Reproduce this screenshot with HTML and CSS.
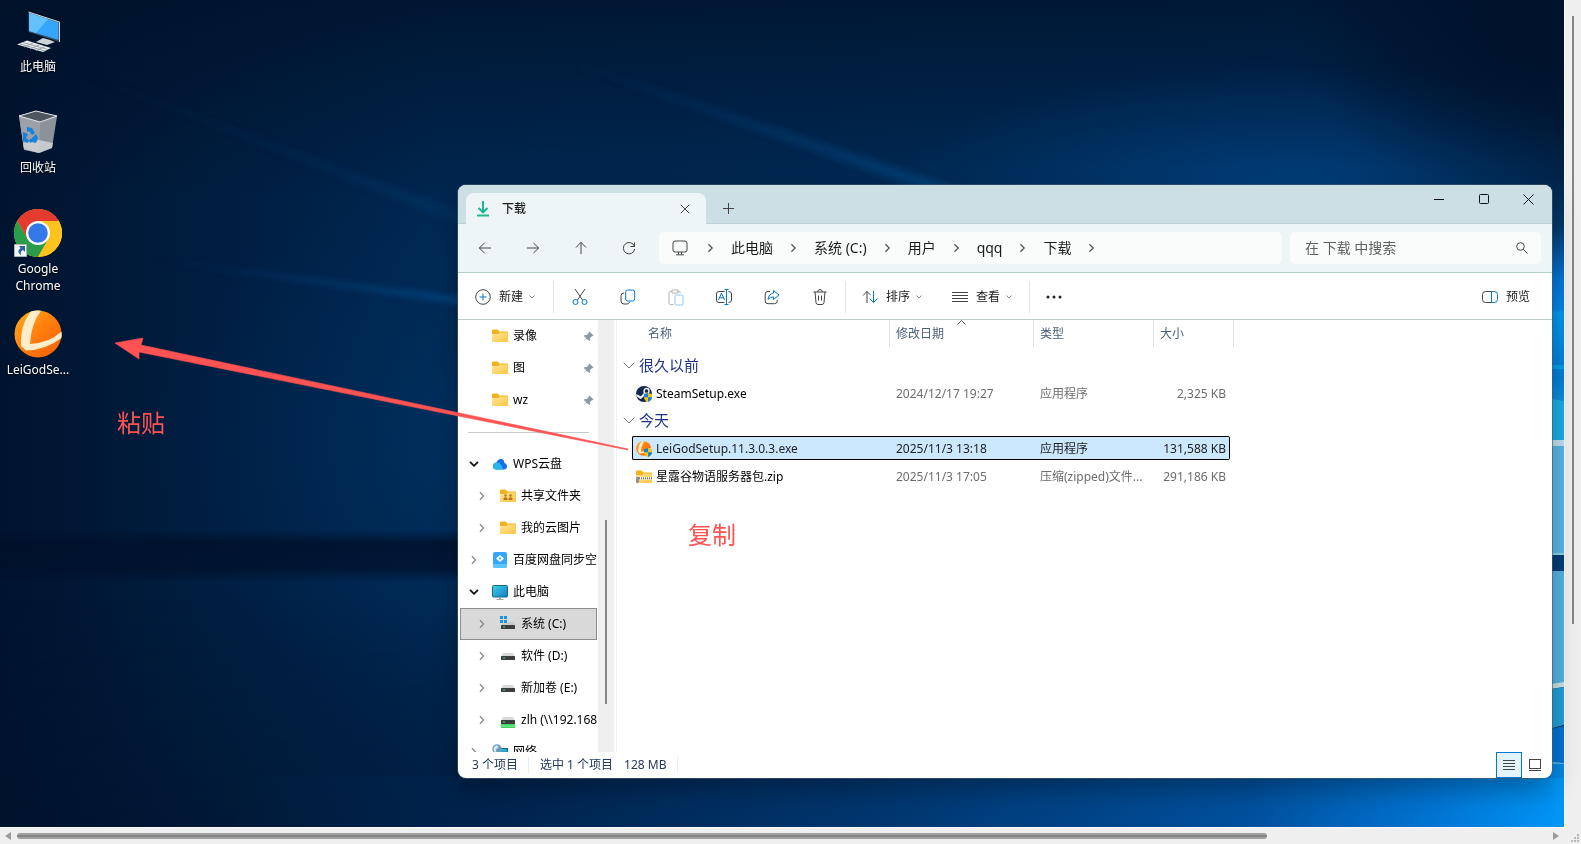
FILE: index.html
```html
<!DOCTYPE html>
<html lang="zh-CN">
<head>
  <meta charset="UTF-8">
  <title>下载</title>
  <link rel="stylesheet" href="styles.css">
</head>
<body>
  <!-- Shared icons -->
  <svg class="sprite" aria-hidden="true">
    <defs>
      <linearGradient id="gFolder" x1="0" y1="0" x2="1" y2="1">
        <stop offset="0" stop-color="#ffe59b"/><stop offset="1" stop-color="#fcc640"/>
      </linearGradient>
      <linearGradient id="gScreen" x1="0" y1="0" x2="1" y2="1">
        <stop offset="0" stop-color="#3ed5e4"/><stop offset="1" stop-color="#1277c4"/>
      </linearGradient>
      <linearGradient id="gLei" x1="0" y1="0" x2="1" y2="1">
        <stop offset="0" stop-color="#ffae1c"/><stop offset=".5" stop-color="#ff7d0d"/><stop offset="1" stop-color="#f45c06"/>
      </linearGradient>
      <symbol id="folder" viewBox="0 0 16 14">
        <path d="M0 1.500Q0 .5 1 .5h4.500l2 2H15q1 0 1 1V8H0z" fill="#f3b11c"/>
        <path d="M0 5h6l1.500-1.500H15q1 0 1 1V12q0 1-1 1H1q-1 0-1-1z" fill="url(#gFolder)"/>
      </symbol>
      <symbol id="pin" viewBox="0 0 12 12">
        <path d="M7 .5 11.500 5l-1 .8-.8-.1L7.500 8l.1 2-1 1L3.900 8.400.5 11.500 3.500 8 1 5.400l1-1h2l2.300-2.200-.2-.8z" fill="#8b9aa5"/>
      </symbol>
      <symbol id="right" viewBox="0 0 8 12">
        <path d="M1.500 1.500 6 6l-4.500 4.500" fill="none" stroke="currentColor" stroke-width="1.500"/>
      </symbol>
      <symbol id="down" viewBox="0 0 10 6">
        <path d="M1 .8 5 4.800l4-4" fill="none" stroke="currentColor" stroke-width="1.800"/>
      </symbol>
      <symbol id="down-thin" viewBox="0 0 12 7">
        <path d="m.7.7 5.300 5.300L11.300.7" fill="none" stroke="currentColor"/>
      </symbol>
      <symbol id="caret" viewBox="0 0 8 6">
        <path d="M1.500 1.500 4 4l2.500-2.500" fill="none" stroke="#8a8a8a"/>
      </symbol>
      <symbol id="drive" viewBox="0 0 16 16">
        <path d="M3 5h10l2 3.500H1z" fill="#d8dadc"/>
        <rect x="1" y="8" width="14" height="4" rx=".5" fill="#3b3d3f"/>
        <rect x="3" y="9.500" width="2" height="1" fill="#3de05b"/>
      </symbol>
      <symbol id="shield" viewBox="0 0 8 9">
        <path d="M4 0 0 1v3q0 3.500 4 5 4-1.500 4-5V1z" fill="#ffc20e"/>
        <path d="M4 0 0 1v3.300h4zM4 4.300V9q4-1.500 4-4.700z" fill="#1583d8"/>
      </symbol>
      <symbol id="lei" viewBox="0 0 48 48">
        <circle cx="24" cy="24" r="23.500" fill="url(#gLei)"/>
        <path d="M17 1.500Q22 0 27 .8 17 14 16 34q19-1 31.500-12.500Q48 25 47.500 28 32 40 12 40.500L7 36Q6 15 17 1.500z" fill="#ffecc9"/>
      </symbol>
    </defs>
  </svg>

  <div class="viewer">
    <main class="desktop">
      <!-- Wallpaper -->
      <svg class="wallpaper" viewBox="0 0 1564 827" preserveAspectRatio="none" aria-hidden="true">
        <defs>
          <linearGradient id="wBase" x1="0" y1="0" x2="1" y2="0">
            <stop offset="0" stop-color="#00142f"/><stop offset=".1" stop-color="#001b3c"/><stop offset=".28" stop-color="#002750"/>
            <stop offset=".6" stop-color="#002a55"/><stop offset=".85" stop-color="#002c5a"/><stop offset="1" stop-color="#001e3e"/>
          </linearGradient>
          <linearGradient id="wTop" x1="0" y1="0" x2="0" y2="1">
            <stop offset="0" stop-color="#001027" stop-opacity=".7"/><stop offset="1" stop-color="#001027" stop-opacity="0"/>
          </linearGradient>
          <radialGradient id="wGlow">
            <stop offset="0" stop-color="#004f98" stop-opacity=".6"/><stop offset=".6" stop-color="#004a90" stop-opacity=".25"/><stop offset="1" stop-color="#004a90" stop-opacity="0"/>
          </radialGradient>
          <radialGradient id="wDark">
            <stop offset="0" stop-color="#00112a" stop-opacity=".85"/><stop offset="1" stop-color="#00112a" stop-opacity="0"/>
          </radialGradient>
          <linearGradient id="wBeam" x1="0" y1="0" x2="1" y2="0">
            <stop offset="0" stop-color="#0b5fac" stop-opacity="0"/><stop offset="1" stop-color="#0b5fac" stop-opacity=".55"/>
          </linearGradient>
          <linearGradient id="wBand" x1="0" y1="0" x2="0" y2="1">
            <stop offset="0" stop-color="#00102a" stop-opacity="0"/><stop offset=".25" stop-color="#00102a" stop-opacity=".8"/>
            <stop offset=".75" stop-color="#00102a" stop-opacity=".7"/><stop offset="1" stop-color="#00102a" stop-opacity="0"/>
          </linearGradient>
          <linearGradient id="wFloor" gradientUnits="userSpaceOnUse" x1="0" y1="0" x2="1564" y2="0">
            <stop offset="0" stop-color="#00224a" stop-opacity="0"/><stop offset=".15" stop-color="#00224a" stop-opacity="0"/>
            <stop offset=".32" stop-color="#00244e"/><stop offset=".55" stop-color="#00356d"/>
            <stop offset=".8" stop-color="#00509d"/><stop offset=".92" stop-color="#0075d4"/><stop offset="1" stop-color="#0096f6"/>
          </linearGradient>
          <linearGradient id="wShade" x1="0" y1="0" x2="0" y2="1">
            <stop offset="0" stop-color="#000f26" stop-opacity="0"/><stop offset="1" stop-color="#000f26" stop-opacity=".35"/>
          </linearGradient>
          <linearGradient id="wEdge" x1="0" y1="0" x2="0" y2="1">
            <stop offset="0" stop-color="#00264d"/><stop offset=".2" stop-color="#003a70"/><stop offset=".4" stop-color="#0074d8"/>
            <stop offset=".53" stop-color="#0086e6"/><stop offset=".54" stop-color="#0099f0"/><stop offset=".8" stop-color="#007ed9"/>
            <stop offset="1" stop-color="#16a3e0"/>
          </linearGradient>
          <filter id="soft" filterUnits="userSpaceOnUse" x="-50" y="-50" width="1700" height="950"><feGaussianBlur stdDeviation="3"/></filter>
        </defs>
        <rect width="1564" height="827" fill="url(#wBase)"/>
        <rect width="1564" height="200" fill="url(#wTop)"/>
        <ellipse cx="1290" cy="200" rx="400" ry="135" fill="url(#wGlow)"/>
        <ellipse cx="470" cy="440" rx="330" ry="260" fill="url(#wGlow)" opacity=".35"/>
        <ellipse cx="1530" cy="40" rx="240" ry="150" fill="url(#wDark)"/>
        <g fill="url(#wBeam)" filter="url(#soft)">
          <path d="M560 56 1110 238v18L560 62z" opacity=".9"/>
          <path d="M60 62 500 226v14L60 68z" opacity=".25"/>
          <path d="M150 258 500 302v7L150 261z"/>
        </g>
        <rect y="600" width="1564" height="227" fill="url(#wShade)"/>
        <rect y="530" width="470" height="52" fill="url(#wBand)"/>
        <rect y="776" width="1564" height="51" fill="url(#wFloor)"/>
        <!-- Strip of the window picture right of the explorer -->
        <g>
          <rect x="1545" y="180" width="19" height="245" fill="url(#wEdge)"/>
          <path d="M1545 365h19v4h-19z" fill="#009fe8"/>
          <path d="M1545 398l19 3v40h-19z" fill="#1caee6"/>
          <path d="M1545 440h19v6h-19z" fill="#bde2ef"/>
          <path d="M1545 446h19v108h-19z" fill="#5ab7e5"/>
          <path d="M1545 553h19v2h-19z" fill="#8bd4ef"/>
          <path d="M1545 555h19v16h-19z" fill="#003e79"/>
          <path d="M1545 571h19v113h-19z" fill="#55b3e2"/>
          <path d="M1545 685l19-3v5l-19 3z" fill="#cbe5e6"/>
          <path d="M1545 690l19-3v38l-19 5z" fill="#20a0d8"/>
          <path d="M1545 730l19-4v37h-19z" fill="#0073d5"/>
          <path d="M1545 761l19 2v2h-19z" fill="#4cb6e9"/>
          <path d="M1545 764h19v14h-19z" fill="#0088e5"/>
        </g>
      </svg>

      <nav class="shortcuts" aria-label="桌面">
        <a class="shortcut" href="#">
          <svg viewBox="0 0 48 48">
            <path d="M14.500 5 45.500 15v20L14.500 25z" fill="#40474e"/>
            <path d="M15 6 44.500 15.500V33L15 24z" fill="#35a6fb"/>
            <path d="M15 6 34 12 22 26l-7-2z" fill="#64c0ff"/>
            <path d="M14.500 5 45.500 15v20" fill="none" stroke="#cfd6dc"/>
            <path d="M29 31l7 2 5 2-8 3-11-3z" fill="#cdd3d7"/>
            <path d="M13 33.500 37 41l-8 4L3 37.500z" fill="#e9eced"/>
            <path d="m6 37 25 7M9 35.500l25 7M10 40l9-4M16 42l9-4M22 43.500l9-4" stroke="#9aa4ab" fill="none"/>
          </svg>
          <span>此电脑</span>
        </a>
        <a class="shortcut" href="#">
          <svg viewBox="0 0 48 48">
            <path d="m5 8 17-5 21 5-5 32-13 5-15-3z" fill="#8b929a"/>
            <path d="m5 8 17-5 21 5-17 6z" fill="#4e565f"/>
            <path d="m5 8 21 6-1 31-15-4z" fill="#9aa1a8"/>
            <path d="m9 35 16-3 14 3-1 5-13 5-15-4z" fill="#d5d8da" opacity=".8"/>
            <path d="m5 8 17-5 21 5-17 6z" fill="none" stroke="#e2e6e9"/>
            <g fill="#1583de">
              <path d="m13 19 5 1 3 5-3 2-3-4-2 1z"/>
              <path d="m9 24 5 2-2 4 3 2-1 3-5-2z"/>
              <path d="m17 31 5-5 2 4-2 5-4-1-2 1-1-3z"/>
            </g>
          </svg>
          <span>回收站</span>
        </a>
        <a class="shortcut" href="#">
          <svg viewBox="0 0 48 48">
            <circle cx="24" cy="24" r="24" fill="#fcc31e"/>
            <path d="M24 12h20.800A24 24 0 0 0 3.200 12l10.400 18z" fill="#e33b2e"/>
            <path d="M3.200 12A24 24 0 0 0 24 48l10.400-18-10.400 6-10.400-6z" fill="#2a9d4b"/>
            <path d="M44.800 12H24l10.400 18L24 48a24 24 0 0 0 20.800-36z" fill="#fcc31e"/>
            <circle cx="24" cy="24" r="12" fill="#fff"/>
            <circle cx="24" cy="24" r="9.800" fill="#3578e8"/>
            <path d="M.5 35.500h12v12H.5z" fill="#f4f6f8" stroke="#aab2ba"/>
            <path d="M5 37h6v6l-2-2q-3 1-2 5-5-3-.5-7z" fill="#2b62a8"/>
          </svg>
          <span>Google Chrome</span>
        </a>
        <a class="shortcut" href="#">
          <svg><use href="#lei"/></svg>
          <span>LeiGodSe...</span>
        </a>
      </nav>

      <!-- Explorer window -->
      <section class="window" aria-label="下载">
        <header class="titlebar">
          <div class="tab">
            <svg class="tab-icon" viewBox="0 0 14 16"><path d="M7 0v11M2.500 7 7 11.300 11.500 7" fill="none" stroke="#22b397" stroke-width="2"/><path d="M1 14.500h12" stroke="#27b98c" stroke-width="2"/></svg>
            <h1>下载</h1>
            <button class="tab-close" aria-label="关闭标签页"><svg width="10" height="10" viewBox="0 0 10 10"><path d="m.8.8 8.400 8.400M9.200.8.8 9.200"/></svg></button>
          </div>
          <button class="tab-new" aria-label="新标签页"><svg width="11" height="11" viewBox="0 0 11 11"><path d="M5.500 0v11M0 5.500h11"/></svg></button>
          <div class="controls">
            <button aria-label="最小化"><svg width="10" height="10" viewBox="0 0 10 10"><path d="M0 5.500h10"/></svg></button>
            <button aria-label="最大化"><svg width="10" height="10" viewBox="0 0 10 10"><rect x=".5" y=".5" width="9" height="9" rx="1"/></svg></button>
            <button aria-label="关闭"><svg width="11" height="11" viewBox="0 0 11 11"><path d="m.5.500 10 10M10.500.5l-10 10"/></svg></button>
          </div>
        </header>

        <div class="navbar">
          <button class="square" aria-label="后退"><svg width="14" height="12" viewBox="0 0 14 12"><path d="M13 6H1.500M6.500 1 1.300 6l5.200 5"/></svg></button>
          <button class="square" aria-label="前进"><svg width="14" height="12" viewBox="0 0 14 12"><path d="M1 6h11.500M7.500 1l5.200 5-5.200 5"/></svg></button>
          <button class="square" aria-label="向上"><svg width="12" height="14" viewBox="0 0 12 14"><path d="M6 13V1.500M1 6.500 6 1.300l5 5.200"/></svg></button>
          <button class="square" aria-label="刷新"><svg width="14" height="14" viewBox="0 0 14 14"><path d="M12.500 5.500A5.700 5.700 0 1 0 12.700 8M12.500 1.500v4h-4"/></svg></button>
          <div class="address">
            <svg class="place" width="16" height="16" viewBox="0 0 16 16"><rect x="1" y="1" width="14" height="11" rx="2"/><path d="M6.500 12v2.500M9.500 12v2.500M4 14.800h8"/></svg>
            <svg class="sep"><use href="#right"/></svg><a href="#">此电脑</a>
            <svg class="sep"><use href="#right"/></svg><a href="#">系统 (C:)</a>
            <svg class="sep"><use href="#right"/></svg><a href="#">用户</a>
            <svg class="sep"><use href="#right"/></svg><a href="#">qqq</a>
            <svg class="sep"><use href="#right"/></svg><a href="#">下载</a>
            <svg class="sep"><use href="#right"/></svg>
          </div>
          <label class="search">
            <input type="text" placeholder="在 下载 中搜索" aria-label="在 下载 中搜索">
            <svg width="12" height="12" viewBox="0 0 12 12"><circle cx="4.500" cy="4.500" r="3.800"/><path d="m7.300 7.300 4.200 4.200"/></svg>
          </label>
        </div>

        <div class="toolbar">
          <button class="tool new">
            <svg width="16" height="16" viewBox="0 0 16 16"><circle cx="8" cy="8" r="7.300"/><path class="blue" d="M8 4.500v7M4.500 8h7"/></svg>
            新建<svg class="caret"><use href="#caret"/></svg>
          </button>
          <span class="divider"></span>
          <button class="square" aria-label="剪切"><svg width="16" height="18" viewBox="0 0 16 18"><path d="m3 1 7.500 11M13 1 5.500 12"/><g class="blue"><circle cx="3.500" cy="14" r="2.500"/><circle cx="12.500" cy="14" r="2.500"/></g></svg></button>
          <button class="square" aria-label="复制"><svg width="16" height="16" viewBox="0 0 16 16"><path d="M4 4Q1 4 1 6.500V12q0 3 3 3h3q2 0 2.500-2"/><rect class="blue" x="5.700" y="1" width="9" height="11" rx="2"/></svg></button>
          <button class="square faded" aria-label="粘贴"><svg width="16" height="17" viewBox="0 0 16 17"><path d="M5.500 15.500h-3Q1 15.500 1 14V4q0-1.500 1.500-1.500H4M9.500 2.500H11q1.500 0 1.500 1.500M4 1h6v3H4z"/><rect class="blue" x="7" y="6" width="8" height="10" rx="1"/></svg></button>
          <button class="square" aria-label="重命名"><svg width="18" height="16" viewBox="0 0 18 16"><path d="M9.500 2.500H4q-2.500 0-2.500 2.500v6Q1.500 13.500 4 13.500h5.500M13.500 2.500q3 0 3 2.500v6q0 2.500-3 2.500"/><path class="blue" d="m3.500 11 3-7 3 7M4.500 8.800h4M11.500.5v15M9.500.5h4M9.500 15.500h4"/></svg></button>
          <button class="square" aria-label="共享"><svg width="16" height="16" viewBox="0 0 16 16"><path d="M6 2.500H4Q1.200 2.500 1.200 5v7q0 2.700 2.800 2.700h6.500q2.800 0 2.800-2.700v-1"/><path class="blue" d="M9.500 1.500 15 6l-5.500 4.500V8Q6 7.500 4 10.500 4.500 5 9.500 4z"/></svg></button>
          <button class="square" aria-label="删除"><svg width="14" height="16" viewBox="0 0 14 16"><path d="M.5 3h13M2 3l1 10.500q.2 2 2 2h4q1.800 0 2-2L12 3M4.700 3q0-2.500 2.300-2.500T9.300 3M5.500 6.500v5M8.500 6.500v5"/></svg></button>
          <span class="divider"></span>
          <button class="tool sort">
            <svg width="16" height="14" viewBox="0 0 16 14"><path d="M5 13V1.500M1 5.500l4-4 3.500 3.500"/><path class="blue" d="M11.500 1v11.500M7.500 8.500l4 4 4-4"/></svg>
            排序<svg class="caret"><use href="#caret"/></svg>
          </button>
          <button class="tool view">
            <svg width="16" height="12" viewBox="0 0 16 12"><path d="M0 1.500h16M0 4.500h16M0 7.500h16M0 10.500h16"/></svg>
            查看<svg class="caret"><use href="#caret"/></svg>
          </button>
          <span class="divider"></span>
          <button class="more" aria-label="更多"><svg width="16" height="4" viewBox="0 0 16 4"><g class="dots"><circle cx="2" cy="2" r="1.500"/><circle cx="8" cy="2" r="1.500"/><circle cx="14" cy="2" r="1.500"/></g></svg></button>
          <button class="tool preview">
            <svg width="16" height="12" viewBox="0 0 16 12"><path d="M9.500.5h-6q-3 0-3 3v5q0 3 3 3h6"/><path class="blue" d="M9.500.5v11h3q3 0 3-3v-5q0-3-3-3z"/></svg>
            预览
          </button>
        </div>

        <div class="body">
          <nav class="tree" aria-label="导航窗格">
            <a href="#"><svg class="arrow"></svg><svg class="icon"><use href="#folder"/></svg><span>录像</span><svg class="pin"><use href="#pin"/></svg></a>
            <a href="#"><svg class="arrow"></svg><svg class="icon"><use href="#folder"/></svg><span>图</span><svg class="pin"><use href="#pin"/></svg></a>
            <a href="#"><svg class="arrow"></svg><svg class="icon"><use href="#folder"/></svg><span>wz</span><svg class="pin"><use href="#pin"/></svg></a>
            <hr>
            <a href="#"><svg class="arrow open"><use href="#down"/></svg><svg class="icon" viewBox="0 0 16 16"><path d="M4.500 13.500Q1 13.500 1 10.300 1 7 4.500 6.500 5.500 3 9 3q3 0 3.500 4 2.500.5 2.500 3.200 0 3.300-3.500 3.300z" fill="#176ee6"/><path d="M4.500 13.500Q1 13.500 1 10.300 1 7 4.500 6.500q3.500-.5 5 3l2 4z" fill="#25b5ef"/></svg><span>WPS云盘</span></a>
            <a href="#" class="child"><svg class="arrow"><use href="#right"/></svg><svg class="icon" viewBox="0 0 16 14"><use href="#folder"/><g fill="#b87518"><circle cx="5.500" cy="6.500" r="1.200"/><circle cx="10.500" cy="6.500" r="1.200"/><path d="M3.500 11V9.500q2-2.500 4 0V11zM8.500 11V9.500q2-2.500 4 0V11z"/></g></svg><span>共享文件夹</span></a>
            <a href="#" class="child"><svg class="arrow"><use href="#right"/></svg><svg class="icon"><use href="#folder"/></svg><span>我的云图片</span></a>
            <a href="#"><svg class="arrow"><use href="#right"/></svg><svg class="icon" viewBox="0 0 16 16"><rect x="1" y="0" width="14" height="16" rx="2" fill="#37a5fb"/><path d="M1 12h14v2q0 2-2 2H3q-2 0-2-2z" fill="#5cc4ff"/><path d="m8 3 4 3.500L8 10 4 6.500z" fill="#fff"/><path d="m8 5.200 1.500 1.300L8 7.800 6.500 6.500z" fill="#37a5fb"/></svg><span>百度网盘同步空</span></a>
            <a href="#"><svg class="arrow open"><use href="#down"/></svg><svg class="icon" viewBox="0 0 16 16"><rect x=".5" y="1.500" width="15" height="11.500" rx="1" fill="url(#gScreen)" stroke="#16698f"/><path d="M7 13h2v2h2.500v1h-7v-1H7z" fill="#9aa5ad"/></svg><span>此电脑</span></a>
            <a href="#" class="child selected"><svg class="arrow"><use href="#right"/></svg><svg class="icon" viewBox="0 0 16 16"><path d="M7 6h6l2 3H1z" fill="#c9cbcd"/><rect x="1" y="9" width="14" height="4" rx=".5" fill="#3b3d3f"/><path d="M3 10.500h2v1H3z" fill="#3de05b"/><path d="M0 0h3v3H0zM4 0h3v3H4zM0 4h3v3H0zM4 4h3v3H4z" fill="#1496e8"/></svg><span>系统 (C:)</span></a>
            <a href="#" class="child"><svg class="arrow"><use href="#right"/></svg><svg class="icon"><use href="#drive"/></svg><span>软件 (D:)</span></a>
            <a href="#" class="child"><svg class="arrow"><use href="#right"/></svg><svg class="icon"><use href="#drive"/></svg><span>新加卷 (E:)</span></a>
            <a href="#" class="child"><svg class="arrow"><use href="#right"/></svg><svg class="icon" viewBox="0 0 16 16"><use href="#drive"/><path d="M1 12h14v4H1z" fill="#3cd75e"/><path d="M0 13.500h16v1H0z" fill="#8df0a2"/></svg><span>zlh (\\192.168</span></a>
            <a href="#"><svg class="arrow"><use href="#right"/></svg><svg class="icon" viewBox="0 0 16 16"><rect x="5.500" y="4.500" width="10" height="8" fill="url(#gScreen)" stroke="#16698f"/><circle cx="5" cy="5" r="4.700" fill="#6c9dbd"/><path d="M2 3q3-3 4-1t-2 3q1 3-1 3-2-1-1-5z" fill="#d3e9f1"/></svg><span>网络</span></a>
          </nav>
          <div class="tree-scroll"><span></span></div>

          <div class="files">
            <table>
              <colgroup>
                <col class="col-name"><col class="col-date"><col class="col-type"><col class="col-size">
              </colgroup>
              <thead>
                <tr>
                  <th><div>名称</div></th>
                  <th><div>修改日期<svg class="sorted" viewBox="0 0 9 5"><path d="M.5 4.500l4-4 4 4" fill="none" stroke="#555"/></svg></div></th>
                  <th><div>类型</div></th>
                  <th><div>大小</div></th>
                </tr>
              </thead>
              <tbody>
                <tr class="group"><th colspan="4"><svg><use href="#down-thin"/></svg>很久以前</th></tr>
                <tr>
                  <td><div><svg class="icon" viewBox="0 0 16 16"><circle cx="8" cy="8" r="8" fill="#14284e"/><circle cx="10.500" cy="5" r="2.500" fill="none" stroke="#fff" stroke-width="1.300"/><path d="m0 8 5 2.200 3.500-4 2 1.800-4 3.500Q5 14 3 12L.5 10.500z" fill="#e6edf3"/><use href="#shield" x="8" y="7" width="8" height="9"/></svg>SteamSetup.exe</div></td>
                  <td><div>2024/12/17 19:27</div></td>
                  <td><div>应用程序</div></td>
                  <td><div>2,325 KB</div></td>
                </tr>
                <tr class="group"><th colspan="4"><svg><use href="#down-thin"/></svg>今天</th></tr>
                <tr class="selected">
                  <td><div><svg class="icon" viewBox="0 0 16 16"><use href="#lei" width="15" height="15"/><use href="#shield" x="8" y="7" width="8" height="9"/></svg>LeiGodSetup.11.3.0.3.exe</div></td>
                  <td><div>2025/11/3 13:18</div></td>
                  <td><div>应用程序</div></td>
                  <td><div>131,588 KB</div></td>
                </tr>
                <tr>
                  <td><div><svg class="icon" viewBox="0 0 16 14"><use href="#folder"/><path d="M0 7.500h16M0 9h16" stroke="#fff" stroke-width="1"/><path d="M1 8.200h15" stroke="#70757a" stroke-dasharray="1 1" stroke-width="2"/><path d="M0 7h3v5l-1.500 1.500L0 12z" fill="#8b9196"/></svg>星露谷物语服务器包.zip</div></td>
                  <td><div>2025/11/3 17:05</div></td>
                  <td><div>压缩(zipped)文件...</div></td>
                  <td><div>291,186 KB</div></td>
                </tr>
              </tbody>
            </table>
          </div>
        </div>

        <footer class="status">
          <span class="count">3 个项目</span>
          <span>选中 1 个项目</span>
          <span class="total">128 MB</span>
          <div class="modes">
            <button class="active" aria-label="详细信息"><svg width="12" height="11" viewBox="0 0 12 11"><path d="M0 .5h12M0 3.500h12M0 6.500h12M0 9.500h12"/></svg></button>
            <button aria-label="大图标"><svg width="12" height="12" viewBox="0 0 12 12"><rect x=".5" y=".5" width="11" height="9"/><path d="M0 11.500h12"/></svg></button>
          </div>
        </footer>
      </section>

      <!-- Annotations drawn over the desktop -->
      <svg class="arrow-mark" width="520" height="120" viewBox="0 0 520 120" aria-hidden="true">
        <path d="M0 6 28 1l-2 7 487 104v1L24 15v7z" fill="#fd5353" stroke="#fd5353" stroke-width=".6"/>
      </svg>
      <p class="mark paste">粘贴</p>
      <p class="mark copy">复制</p>
    </main>

    <div class="vscroll"><span></span></div>
    <div class="hscroll">
      <svg viewBox="0 0 6 8"><path d="M6 0v8L0 4z"/></svg>
      <div class="track"><span></span></div>
      <svg viewBox="0 0 6 8"><path d="M0 0v8l6-4z"/></svg>
    </div>
    <div class="grip"><svg width="9" height="9" viewBox="0 0 9 9"><path d="M6 0h2v2H6zM3 3h2v2H3zM6 3h2v2H6zM0 6h2v2H0zM3 6h2v2H3zM6 6h2v2H6z" fill="#b9b9b9"/></svg></div>
  </div>
</body>
</html>
```
FILE: styles.css
```css
* {
  box-sizing: border-box;
}

body {
  margin: 0;
  font-family: "Noto Sans", "Noto Sans CJK SC", sans-serif;
  font-size: 12px;
  line-height: 16px;
  color: #1b1b1b;
}

a {
  color: inherit;
  text-decoration: none;
}

button {
  display: flex;
  align-items: center;
  justify-content: center;
  padding: 0;
  border: none;
  background: none;
  font: inherit;
  color: inherit;
}

svg {
  display: block;
  flex: none;
}

.sprite {
  position: absolute;
  width: 0;
  height: 0;
}

.viewer {
  display: grid;
  grid-template-columns: 1fr 17px;
  grid-template-rows: 1fr 17px;
  height: 100vh;
  overflow: hidden;
  background: #efefef;
}

/* desktop */
.desktop {
  position: relative;
  z-index: 1;
  box-shadow: 0 0 0 1px #fafafa;
}

.wallpaper {
  position: absolute;
  width: 100%;
  height: 100%;
}

.shortcuts {
  position: relative;
  display: grid;
  grid-auto-rows: 101px;
  width: 76px;
  padding-top: 7px;
}

.shortcut {
  display: flex;
  flex-direction: column;
  align-items: center;
  gap: 3px;
  line-height: 17px;
  text-align: center;
  color: #fff;
  text-shadow: 0 1px 2px #000;
}

.shortcut svg {
  width: 48px;
  height: 48px;
}

/* window */
.window {
  position: absolute;
  top: 185px;
  right: 12px;
  bottom: 49px;
  left: 458px;
  display: flex;
  flex-direction: column;
  overflow: hidden;
  border-radius: 8px;
  background: #fff;
  box-shadow: 0 0 0 1px rgba(70, 90, 110, 0.6), 0 12px 26px rgba(0, 0, 0, 0.3);
}

.titlebar {
  display: flex;
  height: 39px;
  padding-left: 8px;
  background: #cbdfe5;
  border-bottom: 1px solid #bcd2d6;
}

.titlebar svg,
.navbar svg,
.toolbar svg,
.modes svg {
  fill: none;
  stroke: #444;
}

.tab {
  display: flex;
  align-items: center;
  width: 240px;
  height: 31px;
  margin-top: 8px;
  padding: 0 16px 0 10px;
  border-radius: 8px 8px 0 0;
  background: #eef5f6;
}

.tab-icon {
  width: 14px;
  height: 16px;
}

.tab h1 {
  margin: 0 0 0 12px;
  font-size: 12px;
  font-weight: 500;
}

.tab-close {
  margin-left: auto;
}

.tab-new {
  width: 45px;
  margin-top: 8px;
}

.controls {
  display: flex;
  margin: 0 1px 0 auto;
}

.controls button {
  width: 45px;
  height: 28px;
}

.controls svg {
  stroke: #111;
}

.navbar {
  display: flex;
  align-items: center;
  height: 49px;
  padding: 0 11px 0 3px;
  background: #eef5f6;
  border-bottom: 1px solid #b6cccb;
}

.square {
  width: 48px;
  height: 32px;
}

.address {
  display: flex;
  flex: 1;
  align-items: center;
  gap: 17px;
  height: 32px;
  margin-left: 6px;
  padding-left: 13px;
  border-radius: 5px;
  background: #fafcfc;
  font-size: 14px;
}

.address .place {
  margin-right: 2px;
}

.address .sep {
  width: 7px;
  height: 10px;
  color: #555;
  stroke: none;
}

.search {
  display: flex;
  align-items: center;
  width: 251px;
  height: 32px;
  margin-left: 8px;
  padding: 0 13px 0 15px;
  border-radius: 5px;
  background: #fafcfc;
}

.search input {
  flex: 1;
  min-width: 0;
  padding: 0;
  border: none;
  outline: none;
  background: none;
  font: inherit;
  font-size: 14px;
}

.search input::placeholder {
  color: #5f6161;
}

.toolbar {
  display: flex;
  align-items: center;
  height: 47px;
  padding-top: 2px;
  border-bottom: 1px solid #b9cbca;
}

.toolbar .blue {
  stroke: #0078d4;
}

.toolbar .faded {
  opacity: 0.4;
}

.toolbar .dots {
  fill: #222;
  stroke: none;
}

.divider {
  width: 1px;
  height: 32px;
  margin: 0 2px 0 1px;
  background: #e4e4e4;
}

.tool {
  gap: 8px;
  height: 32px;
}

.tool .caret {
  width: 8px;
  height: 6px;
  margin-left: -3px;
}

.new {
  padding: 0 16px 0 17px;
}

.sort {
  padding: 0 15px 0 14px;
}

.view {
  padding: 0 15px 0 14px;
}

.more {
  width: 44px;
  height: 32px;
}

.preview {
  margin-left: auto;
  padding-right: 22px;
}

.body {
  display: flex;
  flex: 1;
  min-height: 0;
}

/* navigation pane */
.tree {
  width: 140px;
  padding: 0 1px 0 2px;
  overflow: hidden;
  color: #000;
}

.tree a {
  display: flex;
  align-items: center;
  height: 32px;
  padding-left: 6px;
  overflow: hidden;
  white-space: nowrap;
}

.tree .child {
  padding-left: 14px;
}

.tree .selected {
  border: 1px solid #8d8d8d;
  padding-left: 13px;
  background: #d9d9d9;
}

.tree .arrow {
  width: 16px;
  height: 10px;
  margin-right: 10px;
  color: #858585;
}

.tree .arrow.open {
  height: 6px;
  color: #111;
}

.icon {
  width: 16px;
  height: 16px;
  margin-right: 5px;
}

.tree .pin {
  width: 11px;
  height: 11px;
  margin: 0 3px 0 auto;
}

.tree hr {
  height: 1px;
  margin: 16px 8px 15px;
  border: none;
  background: #c9c9c9;
}

.tree-scroll {
  display: flex;
  align-items: flex-start;
  justify-content: center;
  width: 16px;
  padding-top: 200px;
  background: #efefef;
}

.tree-scroll span {
  width: 2px;
  height: 184px;
  background: #858585;
}

/* file list */
.files {
  flex: 1;
  min-width: 0;
  margin-left: 2px;
  border-left: 1px solid #f1f1f1;
}

table {
  width: 617px;
  table-layout: fixed;
  border-collapse: collapse;
}

.col-name {
  width: 272px;
}

.col-date {
  width: 144px;
}

.col-type {
  width: 120px;
}

.col-size {
  width: 81px;
}

th,
td {
  padding: 0;
  font-weight: 400;
  text-align: left;
  white-space: nowrap;
}

thead th {
  height: 32px;
  vertical-align: top;
}

thead div {
  position: relative;
  height: 27px;
  padding: 6px 0 0 6px;
  border-left: 1px solid #e2e2e2;
  color: #4c607a;
}

thead th:first-child div {
  padding-left: 31px;
  border-left: none;
}

thead th:last-child div {
  border-right: 1px solid #e2e2e2;
}

.sorted {
  position: absolute;
  top: 0;
  left: 67px;
  width: 9px;
  height: 5px;
}

.group th {
  height: 27px;
  padding-bottom: 2px;
  font-size: 15px;
  color: #1e3287;
}

.group svg {
  display: inline-block;
  width: 12px;
  height: 7px;
  margin: 0 4px 2px 6px;
  color: #777;
}

td {
  height: 28px;
  color: #6d6d6d;
}

td div {
  display: flex;
  align-items: center;
  height: 24px;
  padding: 2px 0 0 7px;
  border: 0 solid transparent;
}

td:first-child div {
  margin-left: 15px;
  padding-left: 4px;
  color: #000;
}

td:first-child .icon {
  margin-right: 4px;
}

td:last-child div {
  justify-content: flex-end;
  margin-right: 4px;
  padding: 2px 4px 0 0;
}

.selected td div {
  border-color: #000;
  border-width: 1px 0;
  background: #cce8ff;
  color: #222;
}

.selected td:first-child div {
  border-left-width: 1px;
  border-radius: 2px 0 0 2px;
  padding-left: 3px;
}

.selected td:last-child div {
  border-right-width: 1px;
  border-radius: 0 2px 2px 0;
  padding-right: 3px;
}

/* status bar */
.status {
  display: flex;
  align-items: center;
  height: 26px;
  padding-left: 14px;
  color: #22395b;
}

.count,
.total {
  padding-right: 10px;
  border-right: 1px solid #ececec;
}

.count {
  margin-right: 11px;
}

.total {
  margin-left: 11px;
}

.modes {
  display: flex;
  margin-left: auto;
  padding-right: 4px;
}

.modes button {
  width: 26px;
  height: 26px;
}

.modes .active {
  border: 1px solid #0078d4;
  background: #e5f3fb;
}

/* annotations */
.arrow-mark {
  position: absolute;
  top: 337px;
  left: 115px;
}

.mark {
  position: absolute;
  margin: 0;
  font-size: 24px;
  line-height: 32px;
  color: #fd5353;
}

.paste {
  top: 407px;
  left: 117px;
}

.copy {
  top: 519px;
  left: 688px;
}

/* viewer scrollbars */
.vscroll {
  display: flex;
  justify-content: center;
  padding: 16px 0 0 1px;
}

.vscroll span {
  width: 2px;
  height: 75%;
  background: #858585;
}

.hscroll {
  display: flex;
  align-items: center;
  gap: 6px;
  padding: 1px 5px 0;
}

.hscroll svg {
  width: 6px;
  height: 8px;
  fill: #9b9b9b;
}

.track {
  flex: 1;
  padding-right: 18%;
}

.track span {
  display: block;
  height: 6px;
  border-radius: 3px;
  background: linear-gradient(#a0a0a0 33%, #848484 33%, #848484 67%, #a0a0a0 67%);
}

.grip {
  display: flex;
  align-items: flex-end;
  justify-content: flex-end;
  padding: 1px;
}
```
